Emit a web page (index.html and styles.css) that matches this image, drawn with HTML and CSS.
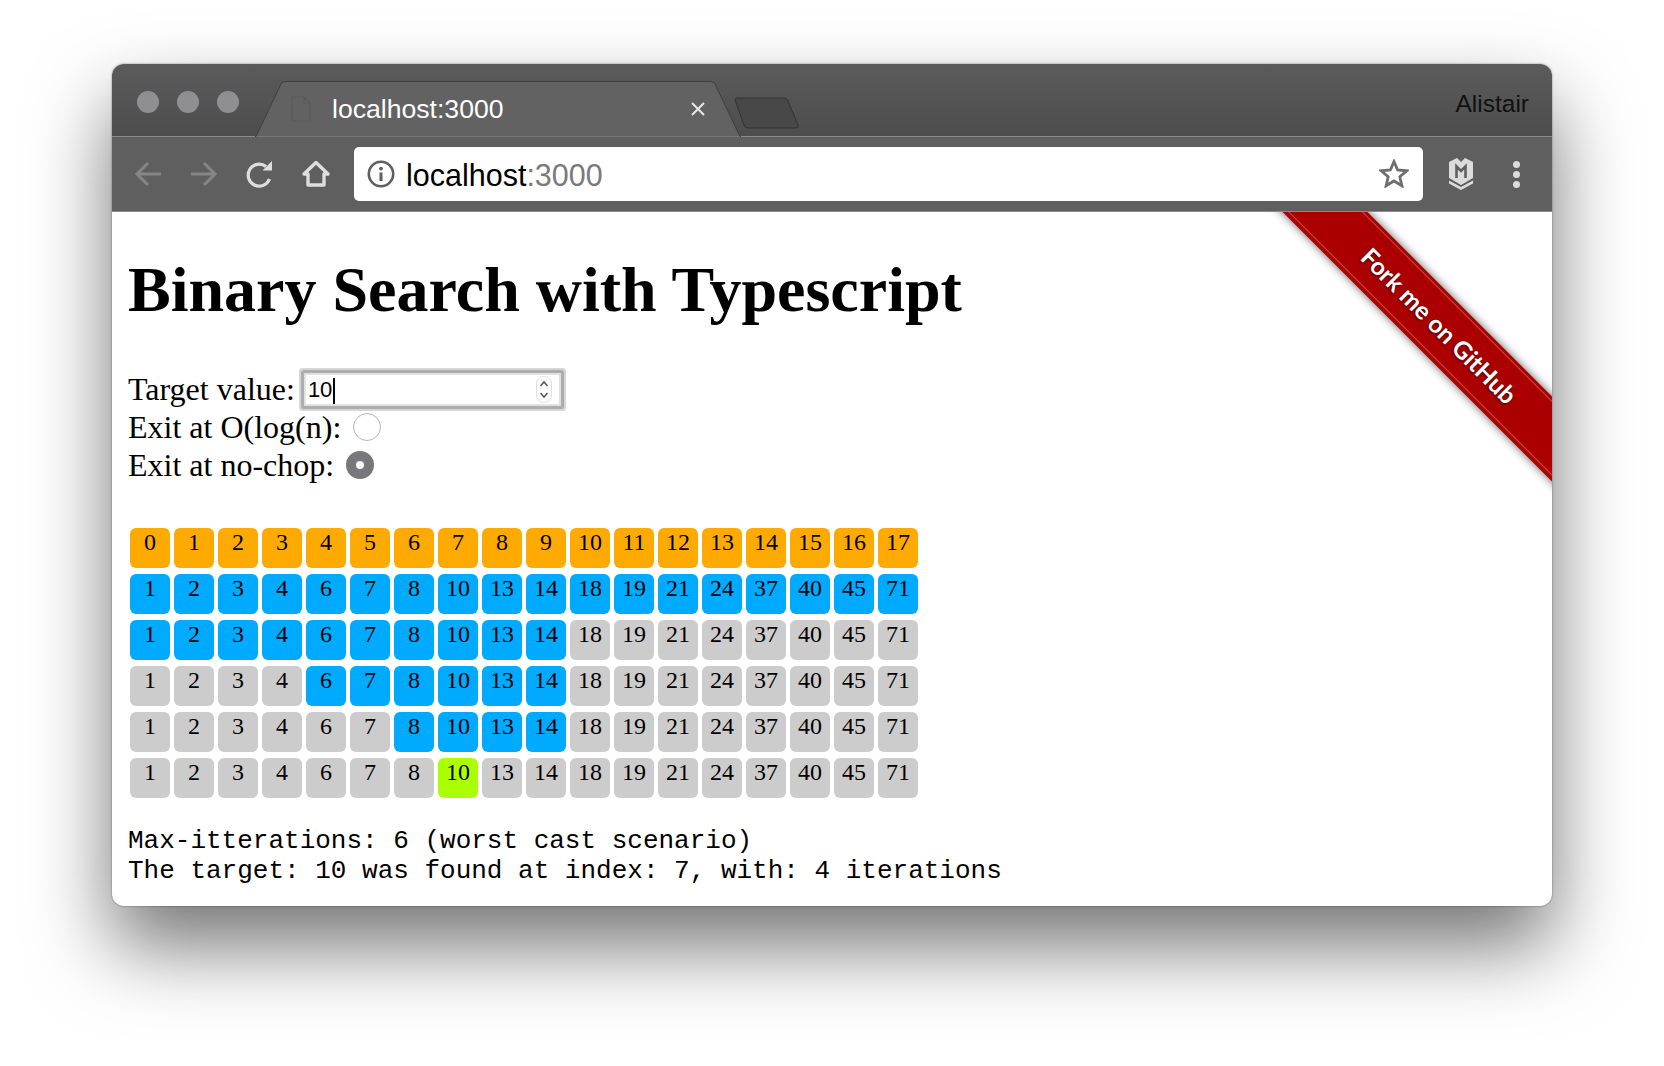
FILE: index.html
```html
<!DOCTYPE html>
<html lang="en">
<head>
  <meta charset="UTF-8">
  <title>Binary Search with Typescript</title>
  <link rel="stylesheet" href="styles.css">
</head>
<body>
  <div class="window">
    <div class="tabstrip">
      <div class="lights">
        <span class="light"></span>
        <span class="light"></span>
        <span class="light"></span>
      </div>
      <div class="tab">
        <svg class="tab-shape" width="486" height="56" viewBox="0 0 486 56">
          <path d="M0 55.5 H1 L26 3 Q27 .5 30 .5 H456 Q459 .5 460 3 L485 55.5 H486" fill="#626262" stroke="#3f3f3f"/>
        </svg>
        <svg class="tab-file" width="20" height="26" viewBox="0 0 20 26">
          <path d="M1 1 H13 L19 7 V25 H1 Z M13 1 V7 H19" fill="none" stroke="#5a5a5a" stroke-width="1.2"/>
        </svg>
        <span class="tab-title">localhost:3000</span>
        <svg class="tab-close" width="14" height="14" viewBox="0 0 14 14">
          <path d="M1 1 L13 13 M13 1 L1 13" stroke="#e8e8e8" stroke-width="2"/>
        </svg>
      </div>
      <svg class="newtab" width="66" height="32" viewBox="0 0 66 32">
        <path d="M1 3 Q1 1 3 1 H50 Q53 1 54 4 L64 28 Q65 31 62 31 H14 Q11 31 10 28 Z" fill="#484848" stroke="#333"/>
      </svg>
      <span class="profile">Alistair</span>
    </div>

    <div class="toolbar">
      <svg class="nav-icon" width="28" height="26" viewBox="0 0 28 26">
        <path d="M27 13 H3 M14 2 L3 13 L14 24" fill="none" stroke="#858585" stroke-width="3"/>
      </svg>
      <svg class="nav-icon" width="28" height="26" viewBox="0 0 28 26">
        <path d="M1 13 H25 M14 2 L25 13 L14 24" fill="none" stroke="#858585" stroke-width="3"/>
      </svg>
      <svg class="nav-icon" width="28" height="28" viewBox="0 0 28 28">
        <path d="M23.5 19 A11 11 0 1 1 20 6.5" fill="none" stroke="#dedede" stroke-width="3.2"/>
        <path d="M16.5 10.5 H26 V1 Z" fill="#dedede"/>
      </svg>
      <svg class="nav-icon" width="28" height="27" viewBox="0 0 28 27">
        <path d="M14 2.5 L26 14 H22 V25 H6 V14 H2 Z" fill="none" stroke="#dedede" stroke-width="3.4" stroke-linejoin="round"/>
      </svg>
      <div class="omnibox">
        <svg width="28" height="28" viewBox="0 0 28 28">
          <circle cx="14" cy="14" r="12.2" fill="none" stroke="#5f5f5f" stroke-width="2.6"/>
          <circle cx="14" cy="8.6" r="1.9" fill="#5f5f5f"/>
          <path d="M14 12.5 V21" stroke="#5f5f5f" stroke-width="3"/>
        </svg>
        <span class="url">localhost<span class="url-port">:3000</span></span>
        <svg class="star" width="30" height="29" viewBox="0 0 30 29">
          <path d="M15 2.5 L18.6 11 L27.8 11.8 L20.8 17.8 L22.9 26.8 L15 22 L7.1 26.8 L9.2 17.8 L2.2 11.8 L11.4 11 Z" fill="none" stroke="#6f6f6f" stroke-width="2.8"/>
        </svg>
      </div>
      <svg class="shield" width="24" height="32" viewBox="0 0 24 32">
        <path d="M0 4 L8 0 L12 4 L16 0 L24 4 V20 L12 27 L0 20 Z" fill="#dcdcdc"/>
        <path d="M7.5 20 V8.5 L12 13 L16.5 8.5 V20" fill="none" stroke="#5f5f5f" stroke-width="2.6"/>
        <path d="M0 22.5 L12 29 L24 22.5 V25.5 L12 32 L0 25.5 Z" fill="#dcdcdc"/>
      </svg>
      <div class="menu-dots">
        <span class="dot"></span>
        <span class="dot"></span>
        <span class="dot"></span>
      </div>
    </div>

    <div class="page">
      <a class="ribbon"><span class="ribbon-text">Fork me on GitHub</span></a>
      <h1>Binary Search with Typescript</h1>
      <div class="controls">
        <div class="control">
          <label for="target">Target value:</label>
          <div class="number-field">
            <input id="target" type="text" value="10">
            <span class="caret"></span>
            <svg class="spinner" width="16" height="27" viewBox="0 0 16 27">
              <rect x=".5" y=".5" width="15" height="26" rx="7" fill="#fff" stroke="#ddd"/>
              <path d="M4.5 10 L8 6 L11.5 10 M4.5 17 L8 21 L11.5 17" fill="none" stroke="#555" stroke-width="1.5"/>
            </svg>
          </div>
        </div>
        <div class="control">
          <label for="exit-log">Exit at O(log(n):</label>
          <input id="exit-log" class="radio" type="radio" name="exit">
        </div>
        <div class="control">
          <label for="exit-chop">Exit at no-chop:</label>
          <input id="exit-chop" class="radio" type="radio" name="exit" checked>
        </div>
      </div>

      <div class="grid">
        <div class="row">
          <span class="cell index">0</span><span class="cell index">1</span><span class="cell index">2</span><span class="cell index">3</span><span class="cell index">4</span><span class="cell index">5</span><span class="cell index">6</span><span class="cell index">7</span><span class="cell index">8</span><span class="cell index">9</span><span class="cell index">10</span><span class="cell index">11</span><span class="cell index">12</span><span class="cell index">13</span><span class="cell index">14</span><span class="cell index">15</span><span class="cell index">16</span><span class="cell index">17</span>
        </div>
        <div class="row">
          <span class="cell active">1</span><span class="cell active">2</span><span class="cell active">3</span><span class="cell active">4</span><span class="cell active">6</span><span class="cell active">7</span><span class="cell active">8</span><span class="cell active">10</span><span class="cell active">13</span><span class="cell active">14</span><span class="cell active">18</span><span class="cell active">19</span><span class="cell active">21</span><span class="cell active">24</span><span class="cell active">37</span><span class="cell active">40</span><span class="cell active">45</span><span class="cell active">71</span>
        </div>
        <div class="row">
          <span class="cell active">1</span><span class="cell active">2</span><span class="cell active">3</span><span class="cell active">4</span><span class="cell active">6</span><span class="cell active">7</span><span class="cell active">8</span><span class="cell active">10</span><span class="cell active">13</span><span class="cell active">14</span><span class="cell">18</span><span class="cell">19</span><span class="cell">21</span><span class="cell">24</span><span class="cell">37</span><span class="cell">40</span><span class="cell">45</span><span class="cell">71</span>
        </div>
        <div class="row">
          <span class="cell">1</span><span class="cell">2</span><span class="cell">3</span><span class="cell">4</span><span class="cell active">6</span><span class="cell active">7</span><span class="cell active">8</span><span class="cell active">10</span><span class="cell active">13</span><span class="cell active">14</span><span class="cell">18</span><span class="cell">19</span><span class="cell">21</span><span class="cell">24</span><span class="cell">37</span><span class="cell">40</span><span class="cell">45</span><span class="cell">71</span>
        </div>
        <div class="row">
          <span class="cell">1</span><span class="cell">2</span><span class="cell">3</span><span class="cell">4</span><span class="cell">6</span><span class="cell">7</span><span class="cell active">8</span><span class="cell active">10</span><span class="cell active">13</span><span class="cell active">14</span><span class="cell">18</span><span class="cell">19</span><span class="cell">21</span><span class="cell">24</span><span class="cell">37</span><span class="cell">40</span><span class="cell">45</span><span class="cell">71</span>
        </div>
        <div class="row">
          <span class="cell">1</span><span class="cell">2</span><span class="cell">3</span><span class="cell">4</span><span class="cell">6</span><span class="cell">7</span><span class="cell">8</span><span class="cell found">10</span><span class="cell">13</span><span class="cell">14</span><span class="cell">18</span><span class="cell">19</span><span class="cell">21</span><span class="cell">24</span><span class="cell">37</span><span class="cell">40</span><span class="cell">45</span><span class="cell">71</span>
        </div>
      </div>

      <pre class="result">Max-itterations: 6 (worst cast scenario)
The target: 10 was found at index: 7, with: 4 iterations</pre>
    </div>
  </div>
</body>
</html>
```
FILE: styles.css
```css
html, body {
  height: 100%;
}
body {
  margin: 0;
  padding: 64px 112px 0;
  box-sizing: border-box;
  background: white;
  overflow: hidden;
  font-family: "Liberation Serif", serif;
  color: black;
}
.window {
  height: 842px;
  display: flex;
  flex-direction: column;
  border-radius: 12px;
  box-shadow: 0 40px 80px rgba(0, 0, 0, 0.55), 0 0 2px rgba(0, 0, 0, 0.5);
  overflow: hidden;
  background: white;
}

/* tab strip */
.tabstrip {
  height: 73px;
  flex: none;
  box-sizing: border-box;
  display: flex;
  align-items: flex-end;
  padding: 0 23px 0 25px;
  background: linear-gradient(#5b5b5b, #4d4d4d);
  border-bottom: 1px solid #8a8a8a;
}
.lights {
  display: flex;
  gap: 18px;
  align-self: flex-start;
  margin-top: 27px;
}
.light {
  width: 22px;
  height: 22px;
  border-radius: 50%;
  background: #8f8f92;
}
.tab {
  position: relative;
  width: 486px;
  height: 56px;
  margin: 0 -7px -1px 16px;
  flex: none;
}
.tab-shape {
  position: absolute;
  left: 0;
  top: 0;
}
.tab-file {
  position: absolute;
  left: 36px;
  top: 15px;
}
.tab-title {
  position: absolute;
  left: 77px;
  top: 13px;
  font: 26.6px "Liberation Sans", sans-serif;
  color: white;
}
.tab-close {
  position: absolute;
  left: 436px;
  top: 21px;
}
.newtab {
  flex: none;
  align-self: flex-start;
  margin-top: 33px;
}
.profile {
  margin-left: auto;
  align-self: flex-start;
  margin-top: 26px;
  font: 24.5px "Liberation Sans", sans-serif;
  color: #111;
}

/* toolbar */
.toolbar {
  height: 75px;
  flex: none;
  box-sizing: border-box;
  display: flex;
  align-items: center;
  padding: 0 0 1px 22px;
  background: #5f5f5f;
  border-bottom: 1px solid #8a8a8a;
}
.nav-icon {
  flex: none;
  margin-right: 28px;
}
.nav-icon + .omnibox {
  margin-left: -4px;
}
.omnibox {
  width: 1069px;
  height: 54px;
  flex: none;
  box-sizing: border-box;
  display: flex;
  align-items: center;
  gap: 11px;
  padding: 0 14px 0 13px;
  background: white;
  border-radius: 5px;
}
.url {
  margin-top: 3px;
  font: 30.5px "Liberation Sans", sans-serif;
  color: black;
}
.url-port {
  color: #7a7a7a;
}
.star {
  margin-left: auto;
}
.shield {
  margin-left: 26px;
  flex: none;
}
.menu-dots {
  display: flex;
  flex-direction: column;
  gap: 3px;
  margin: 1px 0 0 40px;
}
.dot {
  width: 7px;
  height: 7px;
  border-radius: 50%;
  background: #dcdcdc;
}

/* page */
.page {
  position: relative;
  flex: 1;
  padding: 0 16px;
  overflow: hidden;
}
h1 {
  margin: 41px 0 43px;
  font-size: 64px;
  line-height: 74px;
  font-weight: bold;
}
.controls {
  font-size: 32px;
  line-height: 38px;
}
.control {
  display: flex;
  align-items: center;
  height: 38px;
  gap: 12px;
}
.number-field {
  position: relative;
  margin-left: -3px;
}
.number-field input {
  display: block;
  width: 251px;
  height: 27px;
  padding: 2px 0 0 2px;
  margin: 0;
  box-sizing: content-box;
  border: 2px solid #e2e2e2;
  border-radius: 1px;
  outline: none;
  box-shadow: 0 0 0 3px #adadad, 0 0 0 5px #d6d6d6;
  font: 22px "Liberation Sans", sans-serif;
  color: black;
}
.caret {
  position: absolute;
  left: 29px;
  top: 5px;
  width: 2px;
  height: 26px;
  background: black;
}
.spinner {
  position: absolute;
  right: 9px;
  top: 3px;
}
.radio {
  appearance: none;
  width: 28px;
  height: 28px;
  margin: 0;
  box-sizing: border-box;
  border: 1px solid #b8b8b8;
  border-radius: 50%;
  background: white;
  box-shadow: inset 0 1px 2px rgba(0, 0, 0, 0.05);
}
.radio:checked {
  border: 10px solid #77777c;
}
.grid {
  margin-top: 44px;
  padding-left: 2px;
}
.row {
  display: flex;
  gap: 4px;
  margin-bottom: 6px;
}
.cell {
  width: 40px;
  height: 40px;
  border-radius: 6px;
  background: #cccccc;
  font-size: 24px;
  line-height: 28px;
  text-align: center;
}
.index {
  background: #ffaa00;
}
.active {
  background: #00aaff;
}
.found {
  background: #aaff00;
}
.result {
  margin: 28px 0 0;
  font: 26px/30px "Liberation Mono", monospace;
}

/* ribbon */
.ribbon {
  position: absolute;
  left: 1027px;
  top: 84px;
  width: 600px;
  height: 60px;
  box-sizing: border-box;
  padding: 3px 0;
  background: #aa0000;
  transform: rotate(45deg);
  box-shadow: 0 0 10px rgba(0, 0, 0, 0.6);
}
.ribbon-text {
  display: block;
  height: 51px;
  border-top: 1.5px solid #c84a4a;
  border-bottom: 1.5px solid #c84a4a;
  font: 700 24.5px/51px Lato, sans-serif;
  color: white;
  text-align: center;
  text-shadow: 0 1px 3px rgba(0, 0, 0, 0.6);
}
```
